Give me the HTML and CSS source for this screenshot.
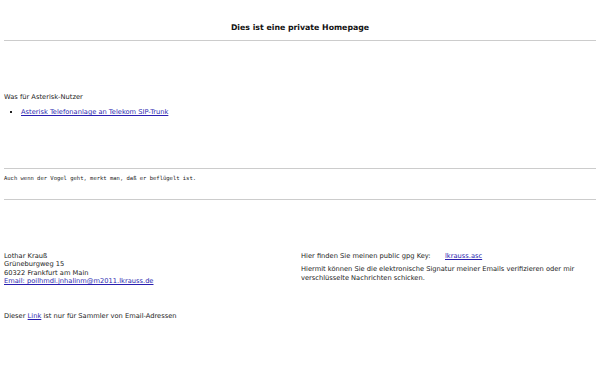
FILE: index.html
```html
<!DOCTYPE html>
<html lang="de">
<head>
<meta charset="utf-8">
<link rel="stylesheet" href="styles.css">
</head>
<body>
<header class="top">
  <h1 class="title">Dies ist eine private Homepage</h1>
  <hr class="rule">
</header>
<section class="intro">
  <p class="lead">Was für Asterisk-Nutzer</p>
  <ul class="links">
    <li><a href="#">Asterisk Telefonanlage an Telekom SIP-Trunk</a></li>
  </ul>
</section>
<hr class="rule">
<pre class="quote">Auch wenn der Vogel geht, merkt man, daß er beflügelt ist.</pre>
<hr class="rule">
<section class="contact">
  <div class="address">
    Lothar Krauß<br>
    Grüneburgweg 15<br>
    60322 Frankfurt am Main<br>
    <a href="#">Email: poilhmdi.jnhalinm@m2011.lkrauss.de</a>
  </div>
  <div class="gpg">
    <p class="keyline"><span>Hier finden Sie meinen public gpg Key:</span><a href="#">lkrauss.asc</a></p>
    <p class="keytext">Hiermit können Sie die elektronische Signatur meiner Emails verifizieren oder mir verschlüsselte Nachrichten schicken.</p>
  </div>
</section>
<p class="trap">Dieser <a href="#">Link</a> ist nur für Sammler von Email-Adressen</p>
</body>
</html>
```
FILE: styles.css
```css
html, body { background: #fff; }
body {
  margin: 0;
  padding: 0 4px;
  font-family: "DejaVu Sans", sans-serif;
  font-size: 6.7px;
  line-height: 8.4px;
  color: #222;
}
a { color: #2a1fb0; text-decoration: underline; }
.top { padding-top: 22px; }
.title {
  margin: 0;
  text-align: center;
  font-size: 7.8px;
  line-height: 11px;
  font-weight: bold;
  color: #111;
}
.rule {
  margin: 7px 0 0;
  border: 0;
  border-top: 1px solid #ccc;
  height: 0;
}
.intro { padding-top: 52px; padding-bottom: 44px; }
.lead { margin: 0; }
.links { margin: 7px 0 0; padding-left: 17px; list-style: square; }
.quote {
  margin: 6px 0 17px;
  font-family: "DejaVu Sans Mono", monospace;
  font-size: 5.5px;
  line-height: 7px;
  color: #222;
}
.contact {
  display: grid;
  grid-template-columns: 296px 1fr;
  padding-top: 52px;
}
.gpg { padding-left: 1px; }
.gpg p { margin: 0; }
.keyline { display: flex; }
.keyline span { width: 144px; }
.keytext { margin-top: 5px !important; }
.trap { margin: 27px 0 0; }
```
